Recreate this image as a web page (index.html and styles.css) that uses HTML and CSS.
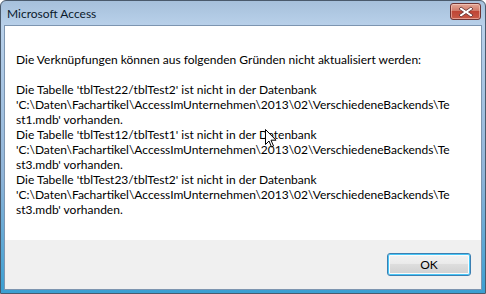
FILE: index.html
```html
<!DOCTYPE html>
<html lang="de">

<head>
  <meta charset="UTF-8">
  <title>Microsoft Access</title>
  <link rel="stylesheet" href="styles.css">
</head>

<body>
  <div class="window">
    <div class="titlebar">
      <span class="title">Microsoft Access</span>
      <button class="close" title="Schließen">
        <svg width="16" height="12" viewBox="0 0 16 12">
          <path d="M3 1 L8 4.5 L13 1 L15 3 L10.5 6 L15 9 L13 11 L8 7.5 L3 11 L1 9 L5.5 6 L1 3 Z"
            fill="#fff" stroke="#5a2a2a" stroke-width="0.8" stroke-linejoin="round" />
        </svg>
      </button>
    </div>
    <div class="client">
      <div class="message">
        <div class="line">Die Verknüpfungen können aus folgenden Gründen nicht aktualisiert werden:</div>
        <div class="line">&nbsp;</div>
        <div class="line">Die Tabelle 'tblTest22/tblTest2' ist nicht in der Datenbank</div>
        <div class="line">'C:\Daten\Fachartikel\AccessImUnternehmen\2013\02\VerschiedeneBackends\Te</div>
        <div class="line">st1.mdb' vorhanden.</div>
        <div class="line">Die Tabelle 'tblTest12/tblTest1' ist nicht in der Datenbank</div>
        <div class="line">'C:\Daten\Fachartikel\AccessImUnternehmen\2013\02\VerschiedeneBackends\Te</div>
        <div class="line">st3.mdb' vorhanden.</div>
        <div class="line">Die Tabelle 'tblTest23/tblTest2' ist nicht in der Datenbank</div>
        <div class="line">'C:\Daten\Fachartikel\AccessImUnternehmen\2013\02\VerschiedeneBackends\Te</div>
        <div class="line">st3.mdb' vorhanden.</div>
      </div>
      <div class="footer">
        <button class="btn">OK</button>
      </div>
    </div>
    <!-- Mauszeiger -->
    <svg class="cursor" width="12" height="19" viewBox="0 0 12 19">
      <path d="M0.5 0.5 L0.5 15.5 L4 12 L6.5 18 L8.5 17 L6 11.2 L11 11.2 Z" fill="#fff" stroke="#000"
        stroke-width="1" stroke-linejoin="miter" />
    </svg>
  </div>
</body>

</html>
```

FILE: styles.css
```css
html,
body {
  margin: 0;
  padding: 0;
}

body {
  font-family: Lato, "Liberation Sans", sans-serif;
  font-size: 12px;
  color: #000;
  background: #fff;
}

.window {
  position: relative;
  width: 486px;
  height: 294px;
  box-sizing: border-box;
  display: flex;
  flex-direction: column;
  padding: 0 3px 3px 3px;
  border: 1px solid #4a5a6c;
  border-radius: 6px 6px 0 0;
  background: linear-gradient(#a6c0db, #b9d1ea 25px, #8fb4d8 60%, #3a9fd2);
}

.titlebar {
  height: 24px;
  display: flex;
  align-items: center;
  justify-content: space-between;
  padding-left: 3px;
}

.title {
  color: #0b1a2c;
  font-size: 12px;
}

.close {
  width: 31px;
  height: 17px;
  margin-top: -3px;
  margin-right: 1px;
  padding: 0;
  display: flex;
  align-items: center;
  justify-content: center;
  border: 1px solid #6e3434;
  border-radius: 3px;
  background: linear-gradient(#e2a796, #d07a6a 45%, #bf4535 50%, #c85a48);
  box-shadow: inset 0 0 0 1px rgba(255, 220, 210, 0.5);
}

.client {
  flex: 1;
  display: flex;
  flex-direction: column;
  border: 1px solid #7d95b0;
  background: #fff;
}

.message {
  flex: 1;
  padding: 26px 0 0 11px;
  font-size: 12px;
  line-height: 15px;
  white-space: nowrap;
}

.footer {
  height: 49px;
  box-sizing: border-box;
  display: flex;
  justify-content: flex-end;
  align-items: flex-start;
  padding: 13px 10px 0 0;
  background: #f0f0f0;
}

.btn {
  width: 84px;
  height: 23px;
  padding: 0;
  font-family: Lato, "Liberation Sans", sans-serif;
  font-size: 12px;
  color: #000;
  border: 1px solid #3c7fb1;
  border-radius: 3px;
  background: linear-gradient(#f2f2f2, #ebebeb 45%, #dddddd 50%, #cfcfcf);
  box-shadow: inset 0 0 0 1px #48c6f7, inset 0 0 0 2px #fbfbfb;
}

.cursor {
  position: absolute;
  left: 264px;
  top: 128px;
}
```
